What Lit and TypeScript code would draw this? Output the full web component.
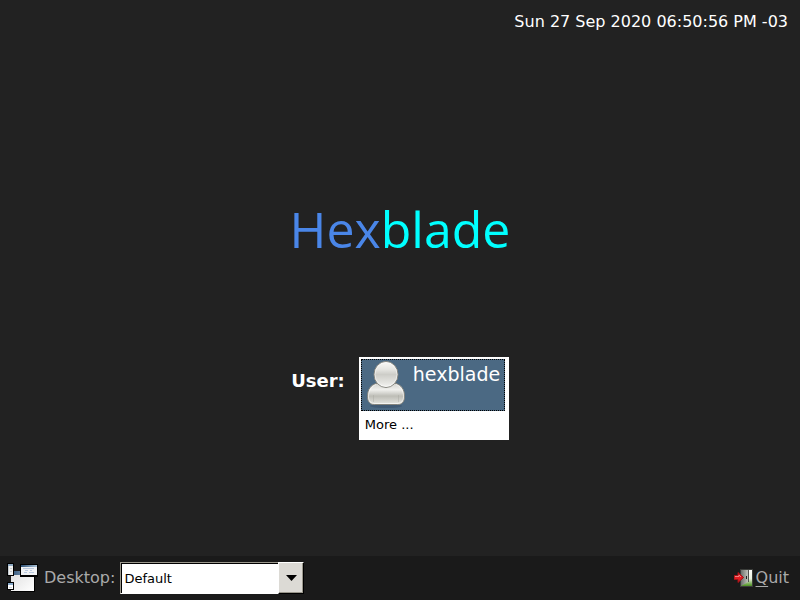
import { LitElement, html, css, svg } from "lit";
import { customElement, state } from "lit/decorators.js";

const avatar = svg`
  <svg width="40" height="47" viewBox="0 0 40 47" aria-hidden="true">
    <defs>
      <linearGradient id="head" x1="0" y1="0" x2="0" y2="1">
        <stop offset="0" stop-color="#fafaf8"/>
        <stop offset="0.3" stop-color="#e6e6e2"/>
        <stop offset="0.5" stop-color="#cdcdc8"/>
        <stop offset="0.8" stop-color="#e4e4e0"/>
        <stop offset="1" stop-color="#f6f6f4"/>
      </linearGradient>
      <linearGradient id="torso" x1="0" y1="0" x2="0" y2="1">
        <stop offset="0" stop-color="#d4d4d0"/>
        <stop offset="0.3" stop-color="#f0f0ed"/>
        <stop offset="0.6" stop-color="#bdbdb6"/>
        <stop offset="1" stop-color="#e6e6e1"/>
      </linearGradient>
    </defs>
    <ellipse cx="19" cy="45" rx="16" ry="2" fill="#38506a" opacity="0.6"/>
    <path d="M9 22.500C4 24 0.500 28 0.500 35.500C0.500 41 3 43.500 7.500 43.500H30.500C35 43.500 37.500 41 37.500 35.500C37.500 28 34 24 29 22.500Z" fill="url(#torso)" stroke="#83837c"/>
    <path d="M9 23.500C5 25 1.500 29 1.500 35.500C1.500 40.500 4 42.500 8 42.500H30C34 42.500 36.500 40.500 36.500 35.500C36.500 29 33 25 29 23.500" fill="none" stroke="#fff" opacity="0.6"/>
    <path d="M6.500 34V41M31.500 34V41" stroke="#a5a59f" opacity="0.4"/>
    <ellipse cx="19" cy="13.500" rx="12" ry="13" fill="url(#head)" stroke="#85857e"/>
    <ellipse cx="19" cy="13.500" rx="11" ry="12" fill="none" stroke="#fff" opacity="0.5"/>
  </svg>`;

const desktopIcon = svg`
  <svg width="32" height="30" viewBox="0 0 32 30" aria-hidden="true">
    <defs>
      <linearGradient id="pane" x1="0" y1="0" x2="1" y2="1">
        <stop offset="0" stop-color="#dedede"/><stop offset="1" stop-color="#fff"/>
      </linearGradient>
      <linearGradient id="bar" x1="0" y1="0" x2="1" y2="0">
        <stop offset="0" stop-color="#2f5277"/><stop offset="1" stop-color="#a9c1d6"/>
      </linearGradient>
    </defs>
    <rect x="4" y="8" width="24" height="21" fill="#000"/>
    <rect x="4" y="8" width="23" height="20" fill="url(#pane)"/>
    <rect x="4" y="8" width="23" height="4" fill="url(#bar)"/>
    <rect x="0" y="0" width="7" height="13" fill="#000"/>
    <rect x="1" y="1" width="5" height="11" fill="#f0f0ee"/>
    <rect x="1" y="1" width="5" height="2" fill="#8ba6be"/>
    <path d="M1.500 3V12M3 5.500H5M3 8.500H5" stroke="#c5ccd2"/>
    <rect x="0" y="19" width="7" height="8" fill="#000"/>
    <rect x="1" y="20" width="5" height="6" fill="#fff"/>
    <rect x="1" y="20" width="5" height="2" fill="#87aacb"/>
    <path d="M2 24.500H5" stroke="#ccd2d8"/>
    <rect x="13" y="1" width="18" height="13" fill="#000"/>
    <rect x="14" y="2" width="16" height="10" fill="#f0f2f5"/>
    <rect x="14" y="2" width="16" height="2" fill="url(#bar)"/>
    <path d="M16 5.500H27M18 7.500H21M23 7.500H25M17 9.500H20M22 9.500H27" stroke="#b9c9df"/>
  </svg>`;

const quitIcon = svg`
  <svg width="20" height="20" viewBox="0 0 20 20" aria-hidden="true">
    <defs>
      <linearGradient id="grass" x1="0" y1="0" x2="0" y2="1">
        <stop offset="0" stop-color="#fff"/><stop offset="0.55" stop-color="#e9f0dc"/>
        <stop offset="1" stop-color="#3f8a12"/>
      </linearGradient>
      <linearGradient id="door" x1="0" y1="0" x2="1" y2="0">
        <stop offset="0" stop-color="#6c706b"/><stop offset="1" stop-color="#c0c4bc"/>
      </linearGradient>
    </defs>
    <rect x="6.500" y="1.500" width="12" height="17" fill="url(#grass)" stroke="#3b3d3a"/>
    <path d="M7 2H14V14L7 18Z" fill="url(#door)"/>
    <path d="M14.500 2V14" stroke="#50534e"/>
    <rect x="12" y="8" width="1" height="3" fill="#1d211d"/>
    <path d="M0 7.500H4V4.500L9.500 9.500L4 14.500V11.500H0Z" fill="#e11d22" stroke="#a01217"/>
    <path d="M1 8.500H5V7L7 9" fill="none" stroke="#f58080"/>
  </svg>`;

@customElement("app-root")
export class AppRoot extends LitElement {
  @state() private selected = "hexblade";

  static styles = css`
    :host {
      display: flex;
      flex-direction: column;
      min-height: 100vh;
      background: #222222;
      color: #ffffff;
      font: 16px/20px "DejaVu Sans", sans-serif;
    }
    header {
      padding: 12px 12px 10px;
      text-align: right;
    }
    main {
      flex: 1;
      display: flex;
      flex-direction: column;
      align-items: center;
      justify-content: center;
      gap: 100px;
      padding-top: 43px;
    }
    h1 {
      margin: 0;
      font: 400 50px/56px "Open Sans", "Noto Sans", sans-serif;
      color: #00ffff;
    }
    .hex {
      color: #4a86e8;
    }
    .login {
      display: flex;
      align-items: flex-start;
      gap: 14px;
    }
    .user-label {
      padding-top: 12px;
      font-size: 18px;
      line-height: 24px;
      font-weight: 700;
    }
    .faces {
      box-sizing: border-box;
      min-width: 150px;
      padding: 2px 4px 2px 2px;
      background: #ffffff;
    }
    button {
      border: 0;
      margin: 0;
      background: none;
      font: inherit;
      cursor: pointer;
    }
    .face {
      display: flex;
      align-items: flex-start;
      gap: 6px;
      width: 100%;
      padding: 1px 3px 2px 5px;
      border: 1px solid transparent;
      color: #000000;
      font-size: 19px;
      line-height: 26px;
    }
    .face.chosen {
      background: #4b6983;
      border: 1px dotted #000000;
      outline: none;
      color: #ffffff;
    }
    .more {
      display: block;
      padding: 4px;
      color: #000000;
      font-size: 13px;
      line-height: 19px;
    }
    footer {
      box-sizing: border-box;
      display: flex;
      align-items: center;
      justify-content: space-between;
      min-height: 44px;
      padding: 0 11px 0 7px;
      background: #1a1a1a;
      color: #aaaaaa;
    }
    svg {
      display: block;
      flex: none;
    }
    .session {
      display: flex;
      align-items: center;
      gap: 5px;
    }
    .combo {
      position: relative;
    }
    select {
      display: block;
      appearance: none;
      box-sizing: border-box;
      width: 184px;
      height: 32px;
      margin: 0;
      padding: 2px 28px 0 3px;
      border: 1px solid;
      border-color: #9a978c #ffffff #ffffff #9a978c;
      border-radius: 0;
      box-shadow: inset 1px 1px #000000;
      background: #ffffff;
      color: #000000;
      font: 13px/20px "DejaVu Sans", sans-serif;
    }
    .arrow {
      position: absolute;
      inset: 0 0 0 auto;
      box-sizing: border-box;
      width: 26px;
      display: flex;
      align-items: center;
      justify-content: center;
      background: #dcdad5;
      border: 1px solid;
      border-color: #ffffff #000000 #000000 #ffffff;
      box-shadow: inset -1px -1px #9a978c;
      pointer-events: none;
    }
    .quit {
      display: flex;
      align-items: center;
      gap: 2px;
      padding: 0;
      color: inherit;
    }
    .quit u {
      text-underline-offset: 3px;
    }
  `;

  render() {
    return html`
      <header><time datetime="2020-09-27T18:50:56-03:00">Sun 27 Sep 2020 06:50:56 PM -03</time></header>
      <main>
        <h1><span class="hex">Hex</span>blade</h1>
        <div class="login">
          <span class="user-label" id="user-label">User:</span>
          <div class="faces" role="group" aria-labelledby="user-label">
            <button
              class="face ${this.selected === "hexblade" ? "chosen" : ""}"
              aria-pressed=${this.selected === "hexblade"}
              @click=${() => (this.selected = "hexblade")}
            >${avatar}<span>hexblade</span></button>
            <button class="more">More ...</button>
          </div>
        </div>
      </main>
      <footer>
        <div class="session">
          ${desktopIcon}
          <label for="desktop">Desktop:</label>
          <div class="combo">
            <select id="desktop"><option>Default</option></select>
            <span class="arrow">
              <svg width="11" height="6" viewBox="0 0 11 6" aria-hidden="true"><path d="M0 0H11L5.500 6Z" fill="#000"/></svg>
            </span>
          </div>
        </div>
        <button class="quit">${quitIcon}<span><u>Q</u>uit</span></button>
      </footer>
    `;
  }
}
